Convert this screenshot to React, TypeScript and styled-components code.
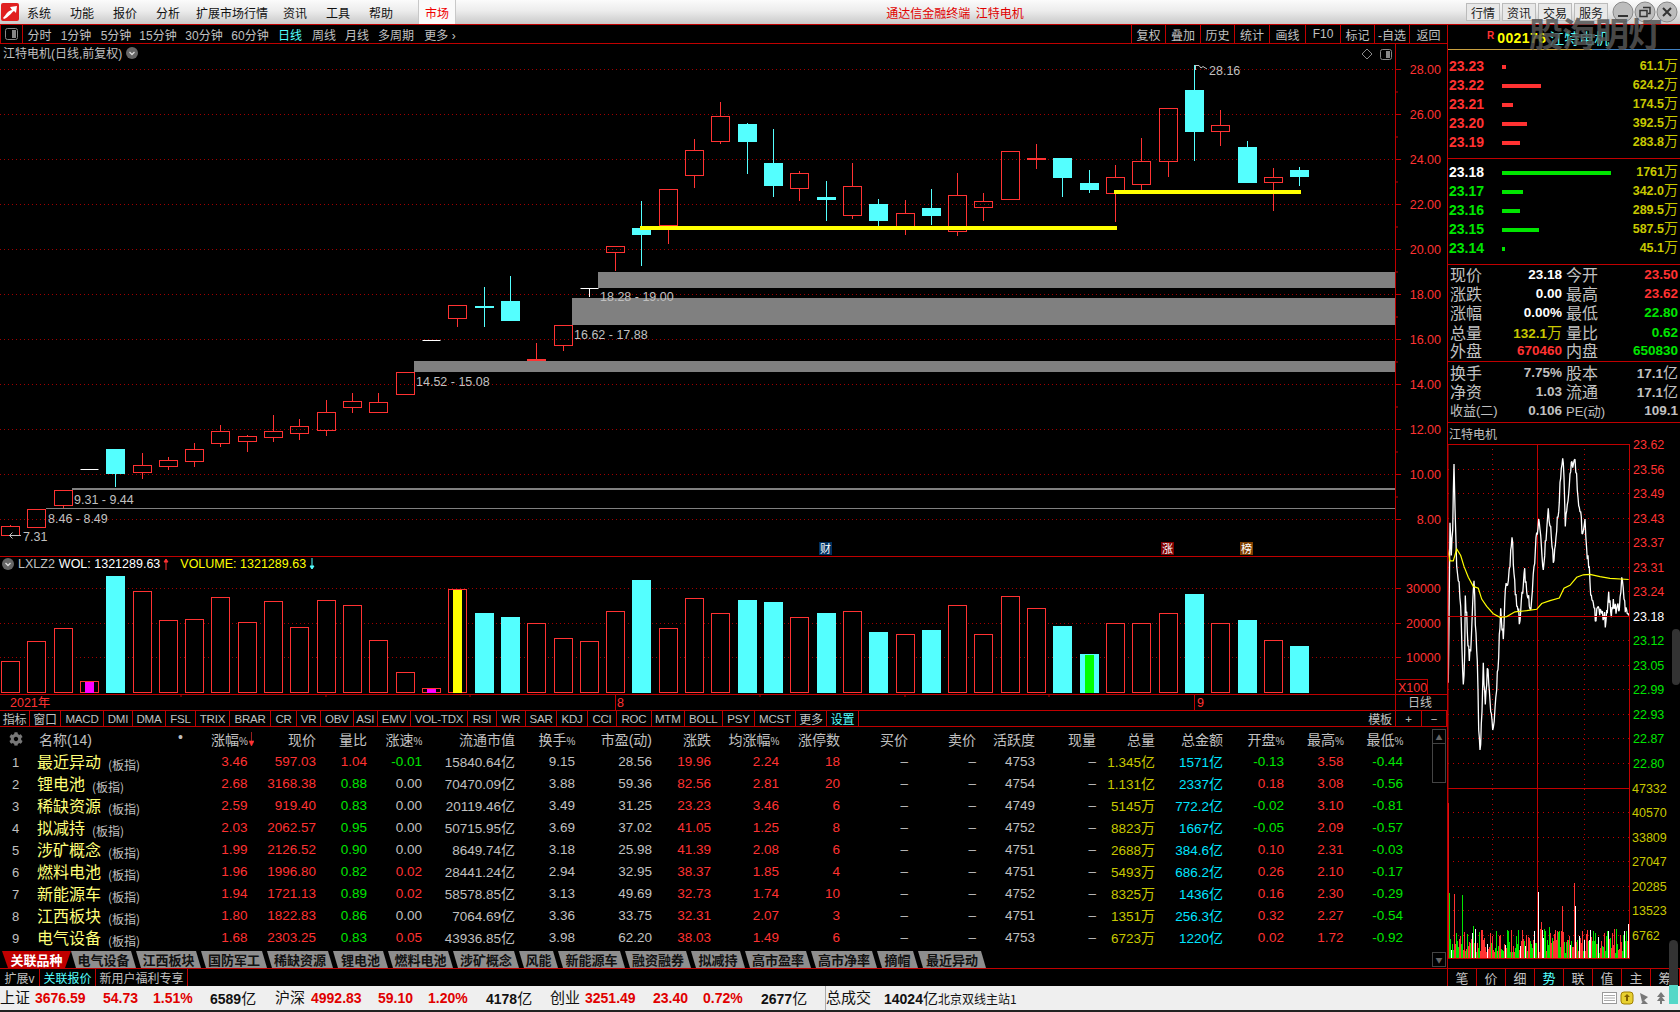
import React from 'react';
import styled, { createGlobalStyle } from 'styled-components';
import { FaCog } from 'react-icons/fa';

const CJK = '"Noto Sans CJK SC", sans-serif';
const SANS = '"Liberation Sans", "Noto Sans CJK SC", sans-serif';
const NARROW = '"Liberation Sans Narrow", "Liberation Sans", "Noto Sans CJK SC", sans-serif';
const RED = '#ff3232';
const LINE = '#c00000';
const CY = '#54ffff';
const GREEN = '#00e600';
const GRAY = '#c0c0c0';
const YEL = '#c8c800';
const SKY = '#00e5ff';

const Global = createGlobalStyle`
  html, body { margin: 0; padding: 0; background: #000; overflow: hidden; }
  * { box-sizing: border-box; }
`;

const Screen = styled.div`
  position: relative; width: 1680px; height: 1012px; background: #000; overflow: hidden;
  display: flex; flex-direction: column; font-family: ${CJK}; color: ${GRAY};
`;

/* ---------- title bar ---------- */
const TopBar = styled.div`
  height: 24px; flex: none; display: flex; align-items: center; color: #111; font-size: 12px;
  background: linear-gradient(#fbfbfb, #ececec 45%, #c9c9c9);
`;
const Logo = styled.svg`width: 18px; height: 18px; margin: 0 8px 0 1px; flex: none;`;
const MenuItem = styled.span<{ $wide?: boolean }>`
  margin-right: ${p => (p.$wide ? 15 : 19)}px; margin-left: ${p => (p.$wide ? -3 : 0)}px; white-space: nowrap;
`;
const MarketTab = styled.span`
  flex: none; width: 38px; height: 24px; margin-left: 6px; color: #f00000; background: #fafafa;
  border-left: 1px solid #c8c8c8; border-right: 1px solid #c8c8c8;
  display: flex; align-items: center; justify-content: center;
`;
const AppTitle = styled.div`
  flex: 1; text-align: center; color: #e00000; padding-right: 12px; white-space: pre;
`;
const TopButton = styled.span`
  width: 34px; height: 18px; margin-right: 2px; border: 1px solid #bbb; background: #e8e8e8; flex: none;
  display: flex; align-items: center; justify-content: center; color: #222;
`;
const WinButton = styled.svg`width: 22px; height: 22px; flex: none; margin-left: 0;`;
const WinGroup = styled.div`display: flex; margin-left: 2px; margin-right: 2px;`;

/* ---------- body ---------- */
const Body = styled.div`flex: 1; min-height: 0; display: flex;`;
const LeftCol = styled.div`width: 1447px; flex: none; display: flex; flex-direction: column;`;
const RightCol = styled.div`
  flex: 1; min-width: 0; display: flex; flex-direction: column; border-left: 1px solid ${LINE}; border-top: 1px solid ${LINE};
`;

const Toolbar = styled.div`
  height: 20px; flex: none; display: flex; align-items: center; font-size: 12px;
  border-top: 1px solid ${LINE}; border-bottom: 1px solid ${LINE};
`;
const PanelToggle = styled.span`
  width: 23px; height: 100%; flex: none; border-left: 1px solid ${LINE}; border-right: 1px solid ${LINE};
  display: flex; align-items: center; justify-content: center;
`;
const ToggleGlyph = styled.svg`width: 13px; height: 12px; display: block;`;
const Period = styled.span<{ $active?: boolean; $w: number }>`
  width: ${p => p.$w}px; flex: none; text-align: center; white-space: nowrap; font-family: ${SANS};
  color: ${p => (p.$active ? CY : GRAY)};
`;
const Spacer = styled.div`flex: 1;`;
const ToolBtn = styled.span<{ $w: number }>`
  width: ${p => p.$w}px; height: 100%; flex: none; border-left: 1px solid ${LINE};
  display: flex; align-items: center; justify-content: center; font-family: ${SANS};
`;

const ChartWrap = styled.div<{ $h: number }>`position: relative; height: ${p => p.$h}px; flex: none;`;
const ChartSvg = styled.svg`display: block;`;
const ChartTitle = styled.div`
  position: absolute; left: 3px; top: 0; font-size: 12px; display: flex; align-items: center; gap: 4px; font-family: ${SANS};
`;
const Chevron = styled.svg`width: 12px; height: 12px; display: block;`;
const VolTitle = styled.div`
  position: absolute; left: 2px; top: 1px; display: flex; align-items: center; font-size: 12.5px; font-family: ${SANS}; white-space: pre;
`;
const TitlePart = styled.span<{ $c: string; $ml?: number }>`color: ${p => p.$c}; margin-left: ${p => p.$ml ?? 0}px;`;
const Badge = styled.span<{ $bg: string; $x: number }>`
  position: absolute; left: ${p => p.$x}px; bottom: 1px; width: 13px; height: 13px; background: ${p => p.$bg}; color: #fff;
  font-size: 11px; line-height: 13px; text-align: center;
`;

const IndexBar = styled.div`
  height: 17px; flex: none; display: flex; align-items: stretch; font-size: 12px; font-family: ${NARROW};
  border-top: 1px solid ${LINE}; border-bottom: 1px solid ${LINE};
`;
const IndexTab = styled.span<{ $w: number; $active?: boolean }>`
  width: ${p => p.$w}px; flex: none; border-right: 1px solid ${LINE}; display: flex; align-items: center; justify-content: center;
  font-family: ${SANS}; font-size: 11.5px; letter-spacing: -0.2px; color: ${p => (p.$active ? CY : GRAY)};
`;
const IndexTabFirst = styled(IndexTab)`font-size: 12px;`;

const TableArea = styled.div`flex: 1; min-height: 0; display: flex;`;
const TableMain = styled.div`width: 1432px; flex: none; display: flex; flex-direction: column;`;
const COLS = '31px 156px 60.5px 68.5px 51px 55px 93px 60px 77px 59px 68px 61px 68px 68px 59px 61px 59px 68px 61px 59.5px 59.5px';
const HeadRow = styled.div`
  display: grid; grid-template-columns: ${COLS}; height: 23px; align-items: center; font-size: 14px; color: ${GRAY};
`;
const HeadCell = styled.span`text-align: right; white-space: nowrap; font-family: ${NARROW}; position: relative;`;
const HeadTight = styled.span`font-size: 10px; letter-spacing: -0.4px;`;
const NameHead = styled.span`
  display: flex; justify-content: space-between; padding: 0 4px 0 8px; font-size: 14px; font-family: ${SANS}; white-space: nowrap;
`;
const GearCell = styled.span`display: flex; justify-content: center; color: #777; font-size: 14px;`;
const SortArrow = styled.svg`position: absolute; right: -6px; top: 3px; width: 5px; height: 14px;`;
const Row = styled.div`display: grid; grid-template-columns: ${COLS}; height: 22px; align-items: center;`;
const RowNo = styled.span`text-align: center; font-family: ${NARROW}; font-size: 13px;`;
const RowName = styled.span`white-space: nowrap; padding-left: 6px; color: #ffff78; font-size: 16px; line-height: 22px;`;
const NameTag = styled.span`color: ${GRAY}; font-size: 12px; margin-left: 7px; position: relative; top: 2px;`;
const Val = styled.span<{ $c?: string }>`
  text-align: right; color: ${p => p.$c || GRAY}; font-family: ${NARROW}; font-size: 13.5px; white-space: nowrap; line-height: 22px;
`;
const Unit = styled.span`font-family: ${CJK}; font-size: 14px;`;
const TabStrip = styled.div`height: 17px; margin-top: 3px; flex: none; display: flex; padding-left: 2px;`;
const StripTab = styled.span<{ $w: number; $first?: boolean }>`
  width: ${p => p.$w}px; flex: none; height: 17px; display: flex; align-items: center; justify-content: center;
  background: ${p => (p.$first ? '#c00000' : '#8e8e8e')}; color: ${p => (p.$first ? '#fff' : '#111')};
  font-size: 13px; font-weight: 700;
  clip-path: ${p => (p.$first ? 'polygon(0 0, 100% 0, calc(100% - 6px) 100%, 6px 100%)' : 'polygon(0 0, calc(100% - 5px) 0, 100% 100%, 5px 100%)')};
`;
const Scrollbar = styled.div`width: 15px; flex: none; display: flex; flex-direction: column; padding: 2px 1px 1px 0;`;
const ScrollBtn = styled.span`
  height: 15px; flex: none; border: 1px solid #444; display: flex; align-items: center; justify-content: center; color: #666; font-size: 7px;
`;
const ScrollThumb = styled.span`height: 39px; flex: none; border: 1px solid #444; border-top: 0;`;

const FootTabs = styled.div`
  height: 18px; flex: none; display: flex; font-size: 12px; border-top: 1px solid ${LINE}; margin-top: 0;
`;
const FootTab = styled.span<{ $w: number; $active?: boolean }>`
  width: ${p => p.$w}px; flex: none; border-right: 1px solid ${LINE}; display: flex; align-items: center; justify-content: center; font-family: ${SANS};
  color: ${p => (p.$active ? CY : GRAY)};
`;

/* ---------- right side ---------- */
const QuoteHead = styled.div`
  height: 25px; flex: none; display: flex; align-items: center; padding-left: 39px; position: relative; font-family: ${SANS};
  &::after { content: ''; position: absolute; left: 0; right: 0; bottom: 0; height: 1px; background: linear-gradient(90deg, #c8a040 0 62%, #4080c0 62%); }
`;
const RMark = styled.span`color: ${RED}; font-weight: 700; font-size: 10px; margin-right: 3px; position: relative; top: -2px;`;
const Code = styled.span`color: #ffff00; font-weight: 700; font-size: 14px; letter-spacing: .4px; margin-right: 3px;`;
const StockName = styled.span`color: ${CY}; font-size: 15px; font-family: ${CJK};`;
const Book = styled.div<{ $h: number; $pt: number }>`
  height: ${p => p.$h}px; flex: none; padding-top: ${p => p.$pt}px; border-bottom: 1px solid ${LINE};
`;
const BookRow = styled.div`display: grid; grid-template-columns: 53px 1fr auto; height: 19px; align-items: center; padding: 0 2px 0 1px; line-height: 19px;`;
const BookPrice = styled.span<{ $c: string }>`color: ${p => p.$c}; font-family: ${SANS}; font-weight: 700; font-size: 14px;`;
const BookBar = styled.span<{ $c: string }>`height: 4px; background: ${p => p.$c}; display: block;`;
const BookVol = styled.span`color: ${YEL}; font-family: ${SANS}; font-weight: 700; font-size: 12.5px; white-space: nowrap; position: relative; top: -1px;`;
const BookUnit = styled.span`font-family: ${CJK}; font-weight: 400; font-size: 14px;`;
const InfoRow = styled.div`display: grid; grid-template-columns: 112px 32px 1fr; column-gap: 4px; height: 19px; align-items: center; padding: 0 2px 0 2px; font-size: 16px;`;
const InfoLabel = styled.span`display: flex; justify-content: space-between; align-items: center; white-space: nowrap; line-height: 19px;`;
const InfoVal = styled.span<{ $c: string }>`
  color: ${p => p.$c}; font-family: ${SANS}; font-weight: 700; font-size: 13.5px; text-align: right; white-space: nowrap; line-height: 19px;
`;
const InfoUnit = styled.span`font-family: ${CJK}; font-weight: 400; font-size: 15px;`;
const SecondLabel = styled.span`white-space: nowrap; line-height: 19px; margin-left: 0;`;
const SmallLabel = styled.span`font-size: 13px; font-family: ${SANS};`;
const MiniTitle = styled.div`height: 21px; flex: none; font-size: 12px; padding: 2px 0 0 1px; margin-bottom: -21px; position: relative; z-index: 1;`;
const MiniChart = styled.svg`display: block; flex: none;`;
const MiniTabs = styled.div`
  height: 19px; flex: none; margin-top: 9px; display: flex; border-top: 1px solid ${LINE}; border-bottom: 1px solid ${LINE};
`;
const MiniTab = styled.span<{ $active?: boolean }>`
  width: 29px; flex: none; border-right: 1px solid ${LINE}; display: flex; align-items: center; justify-content: center; font-size: 13px;
  color: ${p => (p.$active ? CY : GRAY)};
`;

/* ---------- status bar ---------- */
const StatusBar = styled.div`
  height: 26px; flex: none; background: #efefef; border-bottom: 2px solid #222; display: flex; align-items: center; color: #111; font-family: ${SANS};
`;
const StatCell = styled.span<{ $w: number; $c?: string; $label?: boolean; $sep?: boolean }>`
  width: ${p => p.$w}px; flex: none; white-space: nowrap; color: ${p => p.$c || '#111'};
  font-size: ${p => (p.$label ? 15 : 14)}px; font-weight: ${p => (p.$label ? 400 : 700)}; line-height: 24px;
  border-left: ${p => (p.$sep ? '1px solid #aaa' : 'none')};
`;
const StatUnit = styled.span`font-family: ${CJK}; font-weight: 400; font-size: 15px;`;
const StatServer = styled.span`font-size: 12px; white-space: nowrap; font-family: ${CJK};`;
const Tray = styled.svg`margin-left: auto; margin-right: 8px; display: block; flex: none;`;

const Watermark = styled.div`
  position: absolute; left: 1529px; top: 10px; font-size: 34px; font-weight: 700; letter-spacing: -1px;
  color: rgba(85,85,85,.85); pointer-events: none; line-height: 46px; white-space: nowrap;
`;
const Handle = styled.div<{ $t: number; $h: number; $l: number; $w: number }>`
  position: absolute; left: ${p => p.$l}px; top: ${p => p.$t}px; width: ${p => p.$w}px; height: ${p => p.$h}px;
  background: #333; border-radius: 5px;
`;
const HandleFoot = styled(Handle)`
  background: linear-gradient(#333 70%, #54d8c8 70%); border-radius: 5px 5px 0 0;
`;

/* ---------- chart data ---------- */
type C = [string, number, number, number, number];
const candles: C[] = [
  ['r', 526, 535, 525, 535], ['r', 509, 527, 509, 527], ['r', 490, 505, 490, 508], ['w', 469, 469, 469, 469],
  ['c', 449, 474, 449, 487], ['r', 465, 472, 453, 479], ['r', 460, 466, 457, 470], ['r', 449, 461, 443, 467],
  ['r', 431, 443, 425, 447], ['r', 436, 441, 435, 452], ['r', 431, 437, 415, 442], ['r', 426, 433, 419, 440],
  ['r', 412, 430, 400, 436], ['r', 401, 407, 393, 413], ['r', 402, 412, 393, 413], ['r', 372, 394, 372, 394],
  ['w', 340, 340, 340, 340], ['r', 305, 318, 305, 327], ['c', 306, 308, 287, 327], ['c', 301, 321, 276, 321],
  ['d', 360, 360, 343, 360], ['r', 325, 345, 325, 351], ['t', 288, 288, 288, 297], ['r', 246, 252, 246, 271],
  ['c', 228, 235, 201, 266], ['r', 189, 225, 189, 244], ['r', 150, 175, 139, 188], ['r', 116, 141, 102, 144],
  ['c', 124, 142, 123, 174], ['c', 163, 186, 129, 197], ['r', 173, 188, 171, 201], ['c', 197, 200, 181, 221],
  ['r', 186, 215, 163, 219], ['c', 204, 221, 199, 227], ['r', 213, 229, 200, 235], ['c', 208, 216, 189, 225],
  ['r', 195, 231, 173, 236], ['r', 201, 207, 193, 221], ['r', 151, 199, 151, 199], ['d', 159, 159, 144, 169],
  ['c', 158, 178, 158, 197], ['c', 183, 190, 170, 193], ['r', 177, 193, 165, 222], ['r', 161, 184, 138, 191],
  ['r', 108, 161, 108, 177], ['c', 90, 132, 65, 161], ['r', 125, 131, 110, 146], ['c', 147, 183, 141, 183],
  ['r', 177, 182, 168, 211], ['c', 170, 177, 167, 186],
];
const cxOf = (i: number) => Math.round(10 + 26.31 * i) + 0.5;
const vols: [string, number, string?][] = [
  ['r', 661], ['r', 641], ['r', 628], ['r', 681, '#ff00ff'], ['c', 576], ['r', 591], ['r', 620], ['r', 619], ['r', 597], ['r', 622],
  ['r', 601], ['r', 627], ['r', 600], ['r', 605], ['r', 640], ['r', 672], ['r', 688, '#ff00ff'], ['r', 589, '#ffff00'], ['c', 613], ['c', 617],
  ['r', 623], ['r', 638], ['r', 641], ['r', 611], ['c', 580], ['r', 628], ['r', 598], ['r', 613], ['c', 600], ['c', 602],
  ['r', 617], ['c', 613], ['r', 611], ['c', 632], ['r', 634], ['c', 630], ['r', 605], ['r', 634], ['r', 596], ['r', 608],
  ['c', 626], ['c', 654, '#00ff00'], ['r', 623], ['r', 623], ['r', 613], ['c', 594], ['r', 623], ['c', 620], ['r', 640], ['c', 646],
];
const priceGrid = [69, 114, 159, 204, 249, 294, 339, 384, 429, 474, 519];
const priceLabels = ['28.00', '26.00', '24.00', '22.00', '20.00', '18.00', '16.00', '14.00', '12.00', '10.00', '8.00'];

const KChart = () => (
  <ChartSvg width={1447} height={512} viewBox="0 44 1447 512">
    {priceGrid.map(y => <line key={y} x1={0} x2={1395} y1={y + 0.5} y2={y + 0.5} stroke="#a00000" strokeDasharray="1 3" />)}
    <rect x={598} y={272} width={797} height={16} fill="#808080" />
    <rect x={572} y={298} width={823} height={27} fill="#808080" />
    <rect x={414} y={361} width={981} height={11} fill="#808080" />
    <rect x={72} y={488} width={1323} height={2} fill="#808080" />
    <rect x={46} y={508} width={1349} height={1} fill="#808080" />
    {candles.map(([t, top, bot, wt, wb], i) => {
      const cx = cxOf(i);
      if (t === 'w') return <line key={i} x1={cx - 9} x2={cx + 9} y1={top + 0.5} y2={top + 0.5} stroke="#fff" />;
      if (t === 't') return <g key={i} stroke="#fff"><line x1={cx - 9} x2={cx + 9} y1={top + 0.5} y2={top + 0.5} /><line x1={cx} x2={cx} y1={top} y2={wb} /></g>;
      if (t === 'd') return <g key={i}><line x1={cx} x2={cx} y1={wt} y2={wb} stroke={RED} /><rect x={cx - 9.5} y={top - 1} width={19} height={2} fill={RED} /></g>;
      if (t === 'c') return <g key={i}><line x1={cx} x2={cx} y1={wt} y2={wb} stroke={CY} /><rect x={cx - 9.5} y={top} width={19} height={bot - top} fill={CY} /></g>;
      return (
        <g key={i} stroke={RED} fill="none">
          {wt < top && <line x1={cx} x2={cx} y1={wt} y2={top} />}
          {wb > bot && <line x1={cx} x2={cx} y1={bot} y2={wb} />}
          <rect x={cx - 9} y={top + 0.5} width={18} height={bot - top} />
        </g>
      );
    })}
    <rect x={640} y={226} width={477} height={4} fill="#ffff00" />
    <rect x={1114} y={190} width={187} height={4} fill="#ffff00" />
    <g fontFamily="Liberation Sans" fontSize={12.5} fill={GRAY}>
      <text x={600} y={301}>18.28 - 19.00</text>
      <text x={574} y={339}>16.62 - 17.88</text>
      <text x={416} y={386}>14.52 - 15.08</text>
      <text x={74} y={504}>9.31 - 9.44</text>
      <text x={48} y={523}>8.46 - 8.49</text>
      <text x={23} y={541}>7.31</text>
      <text x={1209} y={75}>28.16</text>
    </g>
    <path d="M21 535.5H9M12.5 532.5L9.5 535.5L12.5 538.5" stroke={GRAY} fill="none" />
    <path d="M1195.5 65V70M1195.5 65.5H1199L1201 68L1203 66.5L1207 69" stroke={GRAY} fill="none" />
    <path d="M1367 49l5 5-5 5-5-5z" stroke="#888" fill="none" />
    <rect x={1380.5} y={49.5} width={11} height={10} rx={2} stroke="#888" fill="none" />
    <rect x={1386} y={51} width={4} height={7} fill="#888" />
    <line x1={1395.5} x2={1395.5} y1={44} y2={556} stroke={LINE} />
    {priceGrid.map((y, i) => (
      <g key={y}>
        <line x1={1395} x2={1401} y1={y + 0.5} y2={y + 0.5} stroke={LINE} />
        {y + 22 < 540 && <line x1={1395} x2={1398} y1={y + 23} y2={y + 23} stroke={LINE} />}
        <text x={1441} y={y + 5} textAnchor="end" fontFamily="Liberation Sans" fontSize={12.5} fill={RED}>{priceLabels[i]}</text>
      </g>
    ))}
  </ChartSvg>
);

const VolChart = () => (
  <ChartSvg width={1447} height={154} viewBox="0 556 1447 154">
    <line x1={0} x2={1447} y1={556.5} y2={556.5} stroke={LINE} />
    {[588, 623, 657].map(y => <line key={y} x1={0} x2={1395} y1={y + 0.5} y2={y + 0.5} stroke="#a00000" strokeDasharray="1 3" />)}
    {vols.map(([t, top, inner], i) => {
      const cx = cxOf(i);
      return (
        <g key={i}>
          {t === 'r'
            ? <rect x={cx - 9} y={top + 0.5} width={18} height={693 - top - 1} fill="#000" stroke={RED} />
            : <rect x={cx - 9.5} y={top} width={19} height={693 - top} fill={CY} />}
          {inner && <rect x={cx - 4.5} y={top + 1} width={9} height={692 - top} fill={inner} />}
        </g>
      );
    })}
    <line x1={0} x2={1447} y1={694.5} y2={694.5} stroke={LINE} />
    <line x1={1395.5} x2={1395.5} y1={556} y2={710} stroke={LINE} />
    {[181, 326, 470, 760, 905, 1049].map(x => <line key={x} x1={x} x2={x} y1={694} y2={697} stroke={LINE} />)}
    <line x1={615.5} x2={615.5} y1={694} y2={710} stroke={LINE} />
    <line x1={1194.5} x2={1194.5} y1={694} y2={710} stroke={LINE} />
    <g fontFamily="Liberation Sans" fontSize={12.5} fill={RED}>
      {[['30000', 593], ['20000', 628], ['10000', 662]].map(([t, y]) => <text key={t as string} x={1406} y={y as number}>{t}</text>)}
      <text x={1398} y={692}>X100</text>
      <text x={617} y={707}>8</text>
      <text x={1197} y={707}>9</text>
      <text x={10} y={707} fontFamily="Liberation Sans, Noto Sans CJK SC">2021年</text>
    </g>
    {[588, 623, 657].map(y => <line key={y} x1={1395} x2={1401} y1={y + 0.5} y2={y + 0.5} stroke={LINE} />)}
    <rect x={1395.5} y={679.5} width={32} height={15} fill="none" stroke={LINE} />
    <text x={1408} y={707} fontFamily="Noto Sans CJK SC" fontSize={12} fill={GRAY}>日线</text>
  </ChartSvg>
);

const whiteKnots = [22,265,25,720,30,280,34,370,38,300,42,118,45,240,50,400,55,440,62,510,66,630,70,725,74,640,76,480,82,580,88,660,94,600,98,500,102,440,106,560,112,660,116,850,120,905,126,800,130,665,136,780,142,680,148,740,152,800,158,850,165,790,170,740,176,650,182,515,190,600,196,465,205,440,210,400,216,320,222,420,230,510,240,550,246,470,254,405,260,470,268,510,275,490,282,400,288,320,296,270,304,340,310,410,318,330,325,240,332,290,340,390,348,320,356,250,364,130,370,115,376,290,384,220,392,140,400,120,405,105,412,190,420,250,428,310,435,270,442,380,448,400,452,480,460,500,468,550,475,510,485,530,498,550,506,470,514,540,520,490,528,530,538,520,545,430,552,490,560,520,566,535];
const yellowKnots = [22,350,30,385,40,385,50,352,62,370,72,400,85,430,100,455,115,460,125,490,140,510,160,530,180,540,200,538,225,525,260,522,290,518,305,502,330,494,358,487,372,460,390,452,410,430,430,423,450,422,480,428,510,433,566,436];
const rnd = (n: number) => { const v = Math.sin(n * 12.9898) * 43758.5453; return v - Math.floor(v); };
const mapX = (px: number) => 1440 + px / 3;
const mapY = (py: number) => 420 + py / 2.751;
const smoothPts = (k: number[]) => { const o: string[] = []; for (let i = 0; i < k.length; i += 2) o.push(`${mapX(k[i]).toFixed(1)},${mapY(k[i + 1]).toFixed(1)}`); return o.join(' '); };
const jagged = (() => {
  const o: string[] = [];
  for (let i = 0; i < whiteKnots.length - 2; i += 2) {
    const [x0, y0, x1, y1] = [whiteKnots[i], whiteKnots[i + 1], whiteKnots[i + 2], whiteKnots[i + 3]];
    const steps = Math.max(1, Math.round((x1 - x0) / 2.2));
    for (let s = 0; s < steps; s++) {
      const t = s / steps;
      const amp = s === 0 ? 0 : 22;
      const yy = y0 + (y1 - y0) * t + (rnd(i * 7 + s) - 0.5) * amp * 2;
      o.push(`${mapX(x0 + (x1 - x0) * t).toFixed(1)},${mapY(yy).toFixed(1)}`);
    }
  }
  o.push(`${mapX(566).toFixed(1)},${mapY(535).toFixed(1)}`);
  return o.join(' ');
})();
const miniVols = (() => {
  const out: { x: number; h: number; c: string }[] = [];
  for (let x = 1448; x < 1629; x++) {
    const r = rnd(x * 3.1);
    const h = 6 + rnd(x * 1.7) * 24 + (rnd(x * 0.37) > 0.9 ? 8 : 0);
    out.push({ x, h, c: r < 0.42 ? '#ff3232' : r < 0.84 ? '#00e600' : '#ffffff' });
  }
  const sp: [number, number, string][] = [[1447.6, 1050, '#ff2020'], [1448.5, 1298, '#00e600'], [1454, 1300, '#ff3232'], [1462, 1305, '#00e600'], [1538, 1295, '#ffffff'], [1562, 1335, '#ff3232'], [1574, 1270, '#ff3232'], [1575, 1335, '#ffffff'], [1628, 1385, '#ffffff']];
  sp.forEach(([x, py, c]) => out.push({ x, h: 958 - mapY(py), c }));
  return out;
})();
const miniPrices: [string, number, string][] = [
  ['23.62', 443.6, RED], ['23.56', 468, RED], ['23.49', 492, RED], ['23.43', 517, RED], ['23.37', 541, RED], ['23.31', 566, RED], ['23.24', 590, RED],
  ['23.18', 615, '#fff'], ['23.12', 639, GREEN], ['23.05', 664, GREEN], ['22.99', 688, GREEN], ['22.93', 713, GREEN], ['22.87', 737, GREEN], ['22.80', 762, GREEN],
];
const miniVolLabels: [string, number][] = [['47332', 787.5], ['40570', 811], ['33809', 836], ['27047', 860], ['20285', 885], ['13523', 909], ['6762', 934]];

const MinuteChart = () => (
  <MiniChart width={232} height={536} viewBox="1448 422 232 536">
    {[468, 492, 517, 541, 566, 590, 639, 664, 688, 713, 737, 762, 811, 836, 860, 885, 909, 934].map(y => (
      <line key={y} x1={1448} x2={1629} y1={y + 0.5} y2={y + 0.5} stroke={LINE} strokeDasharray="1 4" />
    ))}
    <line x1={1492.5} x2={1492.5} y1={443} y2={958} stroke={LINE} strokeDasharray="1 4" />
    <line x1={1584.5} x2={1584.5} y1={443} y2={958} stroke={LINE} strokeDasharray="1 4" />
    {miniVols.map((b, i) => <rect key={i} x={b.x} y={958 - b.h} width={1} height={b.h} fill={b.c} shapeRendering="crispEdges" />)}
    <line x1={1537.5} x2={1537.5} y1={443} y2={958} stroke={LINE} />
    <polyline points={jagged} fill="none" stroke="#fff" strokeWidth={1.3} strokeLinejoin="bevel" />
    <line x1={1448} x2={1629} y1={615.5} y2={615.5} stroke={LINE} />
    <polyline points={smoothPts(yellowKnots)} fill="none" stroke="#ffff00" strokeWidth={1.2} />
    <rect x={1448} y={443.5} width={181.5} height={514} fill="none" stroke={LINE} />
    <line x1={1448} x2={1629} y1={787.5} y2={787.5} stroke={LINE} />
    <g fontFamily="Liberation Sans" fontSize={12.5}>
      {miniPrices.map(([t, y, c]) => <text key={t} x={1633} y={y + 4.5} fill={c}>{t}</text>)}
      {miniVolLabels.map(([t, y]) => <text key={t} x={1632} y={y + 4.5} fill={YEL}>{t}</text>)}
    </g>
  </MiniChart>
);

/* ---------- content tables ---------- */
const tone = (v: string) => (parseFloat(v) > 0 ? RED : parseFloat(v) < 0 ? GREEN : GRAY);
const rows = [
  ['最近异动', '3.46', '597.03', '1.04', '-0.01', '15840.64', '9.15', '28.56', '19.96', '2.24', '18', '4753', '1.345', '亿', '1571', '-0.13', '3.58', '-0.44'],
  ['锂电池', '2.68', '3168.38', '0.88', '0.00', '70470.09', '3.88', '59.36', '82.56', '2.81', '20', '4754', '1.131', '亿', '2337', '0.18', '3.08', '-0.56'],
  ['稀缺资源', '2.59', '919.40', '0.83', '0.00', '20119.46', '3.49', '31.25', '23.23', '3.46', '6', '4749', '5145', '万', '772.2', '-0.02', '3.10', '-0.81'],
  ['拟减持', '2.03', '2062.57', '0.95', '0.00', '50715.95', '3.69', '37.02', '41.05', '1.25', '8', '4752', '8823', '万', '1667', '-0.05', '2.09', '-0.57'],
  ['涉矿概念', '1.99', '2126.52', '0.90', '0.00', '8649.74', '3.18', '25.98', '41.39', '2.08', '6', '4751', '2688', '万', '384.6', '0.10', '2.31', '-0.03'],
  ['燃料电池', '1.96', '1996.80', '0.82', '0.02', '28441.24', '2.94', '32.95', '38.37', '1.85', '4', '4751', '5493', '万', '686.2', '0.26', '2.10', '-0.17'],
  ['新能源车', '1.94', '1721.13', '0.89', '0.02', '58578.85', '3.13', '49.69', '32.73', '1.74', '10', '4752', '8325', '万', '1436', '0.16', '2.30', '-0.29'],
  ['江西板块', '1.80', '1822.83', '0.86', '0.00', '7064.69', '3.36', '33.75', '32.31', '2.07', '3', '4751', '1351', '万', '256.3', '0.32', '2.27', '-0.54'],
  ['电气设备', '1.68', '2303.25', '0.83', '0.05', '43936.85', '3.98', '62.20', '38.03', '1.49', '6', '4753', '6723', '万', '1220', '0.02', '1.72', '-0.92'],
];
const heads = ['涨幅%', '现价', '量比', '涨速%', '流通市值', '换手%', '市盈(动)', '涨跌', '均涨幅%', '涨停数', '买价', '卖价', '活跃度', '现量', '总量', '总金额', '开盘%', '最高%', '最低%'];
const indexTabs: [string, number][] = [['MACD', 43], ['DMI', 29], ['DMA', 33], ['FSL', 30], ['TRIX', 34], ['BRAR', 41], ['CR', 26], ['VR', 24], ['OBV', 32.5], ['ASI', 24.5], ['EMV', 33], ['VOL-TDX', 57], ['RSI', 29], ['WR', 29], ['SAR', 31], ['KDJ', 31], ['CCI', 29], ['ROC', 35], ['MTM', 32.5], ['BOLL', 38.5], ['PSY', 32], ['MCST', 41]];
const stripTabs: [string, number][] = [['关联品种', 69], ['电气设备', 65], ['江西板块', 65], ['国防军工', 66], ['稀缺资源', 66], ['锂电池', 55], ['燃料电池', 65], ['涉矿概念', 66], ['风能', 39], ['新能源车', 67], ['融资融券', 66], ['拟减持', 54], ['高市盈率', 66], ['高市净率', 66], ['摘帽', 41], ['最近异动', 68]];
const periods: [string, number, boolean?][] = [['分时', 33], ['1分钟', 40], ['5分钟', 40], ['15分钟', 44], ['30分钟', 48], ['60分钟', 44], ['日线', 36, true], ['周线', 32], ['月线', 34], ['多周期', 44], ['更多 ›', 44]];
const toolBtns: [string, number][] = [['复权', 34], ['叠加', 35], ['历史', 34], ['统计', 35], ['画线', 36], ['F10', 35], ['标记', 34], ['-自选', 35], ['返回', 38]];
const sells: [string, number, string, string][] = [['23.23', 4, '61.1', '万'], ['23.22', 39, '624.2', '万'], ['23.21', 11, '174.5', '万'], ['23.20', 25, '392.5', '万'], ['23.19', 18, '283.8', '万']];
const buys: [string, number, string, string][] = [['23.18', 109, '1761', '万'], ['23.17', 21, '342.0', '万'], ['23.16', 18, '289.5', '万'], ['23.15', 37, '587.5', '万'], ['23.14', 3, '45.1', '万']];

const Cell = ({ v, c, u }: { v: string; c?: string; u?: string }) => <Val $c={c}>{v}{u && <Unit>{u}</Unit>}</Val>;
const HeadLabel = ({ h }: { h: string }) => h.endsWith('%') ? <>{h.slice(0, -1)}<HeadTight>%</HeadTight></> : <>{h}</>;

export default function App() {
  return (
    <Screen>
      <Global />
      <TopBar>
        <Logo viewBox="0 0 18 18">
          <rect width="18" height="18" rx="2" fill="#e02020" />
          <path d="M2 15C5 12 6 8 11 7L9 4L16 3L15 10L13 8C10 10 8 14 3 16Z" fill="#fff" />
        </Logo>
        {['系统', '功能', '报价', '分析'].map(t => <MenuItem key={t}>{t}</MenuItem>)}
        <MenuItem $wide>扩展市场行情</MenuItem>
        {['资讯', '工具', '帮助'].map(t => <MenuItem key={t}>{t}</MenuItem>)}
        <MarketTab>市场</MarketTab>
        <AppTitle>通达信金融终端  江特电机</AppTitle>
        {['行情', '资讯', '交易', '服务'].map(t => <TopButton key={t}>{t}</TopButton>)}
        <WinGroup>
          <WinButton viewBox="0 0 22 22"><circle cx="11" cy="11" r="10" fill="#bdbdbd" stroke="#888" /><rect x="6" y="14" width="10" height="2" fill="#333" /></WinButton>
          <WinButton viewBox="0 0 22 22"><circle cx="11" cy="11" r="10" fill="#bdbdbd" stroke="#888" /><path d="M9 6.5h7v6h-2M6 9.5h7v6H6z" fill="none" stroke="#333" strokeWidth="1.5" /></WinButton>
          <WinButton viewBox="0 0 22 22"><circle cx="11" cy="11" r="10" fill="#bdbdbd" stroke="#888" /><path d="M7 7l8 8M15 7l-8 8" stroke="#333" strokeWidth="2" /></WinButton>
        </WinGroup>
      </TopBar>

      <Body>
        <LeftCol>
          <Toolbar>
            <PanelToggle>
              <ToggleGlyph viewBox="0 0 13 12"><rect x=".5" y=".5" width="12" height="11" rx="2" fill="none" stroke="#888" /><rect x="7" y="2" width="4" height="8" fill="#888" /></ToggleGlyph>
            </PanelToggle>
            {periods.map(([t, w, a]) => <Period key={t} $w={w} $active={a}>{t}</Period>)}
            <Spacer />
            {toolBtns.map(([t, w]) => <ToolBtn key={t} $w={w}>{t}</ToolBtn>)}
          </Toolbar>
          <ChartWrap $h={512}>
            <KChart />
            <ChartTitle>
              江特电机(日线,前复权)
              <Chevron viewBox="0 0 12 12"><circle cx="6" cy="6" r="6" fill="#666" /><path d="M3.5 5L6 7.5L8.5 5" stroke="#ddd" strokeWidth="1.3" fill="none" /></Chevron>
            </ChartTitle>
            <Badge $bg="#003060" $x={819}>财</Badge>
            <Badge $bg="#800000" $x={1161}>涨</Badge>
            <Badge $bg="#804000" $x={1240}>榜</Badge>
          </ChartWrap>
          <ChartWrap $h={154}>
            <VolChart />
            <VolTitle>
              <Chevron viewBox="0 0 12 12"><circle cx="6" cy="6" r="6" fill="#666" /><path d="M3.5 5L6 7.5L8.5 5" stroke="#ddd" strokeWidth="1.3" fill="none" /></Chevron>
              <TitlePart $c={GRAY} $ml={4}>LXLZ2</TitlePart>
              <TitlePart $c="#fff" $ml={4}>WOL: 1321289.63</TitlePart>
              <Chevron viewBox="0 0 12 12"><path d="M6 12V2M4 4L6 1L8 4Z" stroke={RED} fill={RED} /></Chevron>
              <TitlePart $c="#ffff00" $ml={8}>VOLUME: 1321289.63</TitlePart>
              <Chevron viewBox="0 0 12 12"><path d="M6 0V10M4 8L6 11L8 8Z" stroke={CY} fill={CY} /></Chevron>
            </VolTitle>
          </ChartWrap>
          <IndexBar>
            <IndexTabFirst $w={30}>指标</IndexTabFirst>
            <IndexTabFirst $w={31}>窗口</IndexTabFirst>
            {indexTabs.map(([t, w]) => <IndexTab key={t} $w={w}>{t}</IndexTab>)}
            <IndexTabFirst $w={31}>更多</IndexTabFirst>
            <IndexTabFirst $w={32} $active>设置</IndexTabFirst>
            <Spacer />
            <IndexTabFirst $w={31}>模板</IndexTabFirst>
            <IndexTab $w={26}>+</IndexTab>
            <IndexTab $w={25}>−</IndexTab>
          </IndexBar>
          <TableArea>
            <TableMain>
              <HeadRow>
                <GearCell><FaCog /></GearCell>
                <NameHead><span>名称(14)</span><span>•</span></NameHead>
                {heads.map((h, i) => (
                  <HeadCell key={h}>
                    <HeadLabel h={h} />
                    {i === 0 && <SortArrow viewBox="0 0 5 14"><path d="M2.5 0V12M0 9L2.5 14L5 9Z" fill={RED} stroke={RED} strokeWidth=".6" /></SortArrow>}
                  </HeadCell>
                ))}
              </HeadRow>
              {rows.map((r, i) => (
                <Row key={r[0]}>
                  <RowNo>{i + 1}</RowNo>
                  <RowName>{r[0]}<NameTag>(板指)</NameTag></RowName>
                  <Cell v={r[1]} c={RED} />
                  <Cell v={r[2]} c={RED} />
                  <Cell v={r[3]} c={i === 0 ? RED : GREEN} />
                  <Cell v={r[4]} c={tone(r[4])} />
                  <Cell v={r[5]} u="亿" />
                  <Cell v={r[6]} />
                  <Cell v={r[7]} />
                  <Cell v={r[8]} c={RED} />
                  <Cell v={r[9]} c={RED} />
                  <Cell v={r[10]} c={RED} />
                  <Cell v="–" />
                  <Cell v="–" />
                  <Cell v={r[11]} />
                  <Cell v="–" />
                  <Cell v={r[12]} c={YEL} u={r[13]} />
                  <Cell v={r[14]} c={SKY} u="亿" />
                  <Cell v={r[15]} c={tone(r[15])} />
                  <Cell v={r[16]} c={RED} />
                  <Cell v={r[17]} c={GREEN} />
                </Row>
              ))}
              <TabStrip>
                {stripTabs.map(([t, w], i) => <StripTab key={t} $w={w} $first={i === 0}>{t}</StripTab>)}
              </TabStrip>
            </TableMain>
            <Scrollbar>
              <ScrollBtn>▲</ScrollBtn>
              <ScrollThumb />
              <Spacer />
              <ScrollBtn>▼</ScrollBtn>
            </Scrollbar>
          </TableArea>
          <FootTabs>
            <FootTab $w={40}>扩展v</FootTab>
            <FootTab $w={56} $active>关联报价</FootTab>
            <FootTab $w={92}>新用户福利专享</FootTab>
          </FootTabs>
        </LeftCol>

        <RightCol>
          <QuoteHead>
            <RMark>R</RMark><Code>002176</Code><StockName>江特电机</StockName>
          </QuoteHead>
          <Book $h={109} $pt={6}>
            {sells.map(([p, w, v, u]) => (
              <BookRow key={p}>
                <BookPrice $c={RED}>{p}</BookPrice>
                <BookBar $c={RED} style={{ width: w }} />
                <BookVol>{v}<BookUnit>{u}</BookUnit></BookVol>
              </BookRow>
            ))}
          </Book>
          <Book $h={106} $pt={3}>
            {buys.map(([p, w, v, u], i) => (
              <BookRow key={p}>
                <BookPrice $c={i === 0 ? '#fff' : GREEN}>{p}</BookPrice>
                <BookBar $c={GREEN} style={{ width: w }} />
                <BookVol>{v}<BookUnit>{u}</BookUnit></BookVol>
              </BookRow>
            ))}
          </Book>
          <Book $h={97} $pt={0}>
            <InfoRow><InfoLabel>现价<InfoVal $c="#fff">23.18</InfoVal></InfoLabel><SecondLabel>今开</SecondLabel><InfoVal $c={RED}>23.50</InfoVal></InfoRow>
            <InfoRow><InfoLabel>涨跌<InfoVal $c="#fff">0.00</InfoVal></InfoLabel><SecondLabel>最高</SecondLabel><InfoVal $c={RED}>23.62</InfoVal></InfoRow>
            <InfoRow><InfoLabel>涨幅<InfoVal $c="#fff">0.00%</InfoVal></InfoLabel><SecondLabel>最低</SecondLabel><InfoVal $c={GREEN}>22.80</InfoVal></InfoRow>
            <InfoRow><InfoLabel>总量<InfoVal $c={YEL}>132.1<InfoUnit>万</InfoUnit></InfoVal></InfoLabel><SecondLabel>量比</SecondLabel><InfoVal $c={GREEN}>0.62</InfoVal></InfoRow>
            <InfoRow><InfoLabel>外盘<InfoVal $c={RED}>670460</InfoVal></InfoLabel><SecondLabel>内盘</SecondLabel><InfoVal $c={GREEN}>650830</InfoVal></InfoRow>
          </Book>
          <Book $h={61} $pt={0}>
            <InfoRow><InfoLabel>换手<InfoVal $c={GRAY}>7.75%</InfoVal></InfoLabel><SecondLabel>股本</SecondLabel><InfoVal $c={GRAY}>17.1<InfoUnit>亿</InfoUnit></InfoVal></InfoRow>
            <InfoRow><InfoLabel>净资<InfoVal $c={GRAY}>1.03</InfoVal></InfoLabel><SecondLabel>流通</SecondLabel><InfoVal $c={GRAY}>17.1<InfoUnit>亿</InfoUnit></InfoVal></InfoRow>
            <InfoRow><InfoLabel><SmallLabel>收益(二)</SmallLabel><InfoVal $c={GRAY}>0.106</InfoVal></InfoLabel><SecondLabel><SmallLabel>PE(动)</SmallLabel></SecondLabel><InfoVal $c={GRAY}>109.1</InfoVal></InfoRow>
          </Book>
          <MiniTitle>江特电机</MiniTitle>
          <MinuteChart />
          <MiniTabs>
            {['笔', '价', '细', '势', '联', '值', '主', '筹'].map(t => <MiniTab key={t} $active={t === '势'}>{t}</MiniTab>)}
          </MiniTabs>
        </RightCol>
      </Body>

      <StatusBar>
        <StatCell $w={35} $label>上证</StatCell>
        <StatCell $w={68} $c="#e00000">3676.59</StatCell>
        <StatCell $w={50} $c="#e00000">54.73</StatCell>
        <StatCell $w={57} $c="#e00000">1.51%</StatCell>
        <StatCell $w={65}>6589<StatUnit>亿</StatUnit></StatCell>
        <StatCell $w={36} $label>沪深</StatCell>
        <StatCell $w={67} $c="#e00000">4992.83</StatCell>
        <StatCell $w={50} $c="#e00000">59.10</StatCell>
        <StatCell $w={58} $c="#e00000">1.20%</StatCell>
        <StatCell $w={64}>4178<StatUnit>亿</StatUnit></StatCell>
        <StatCell $w={35} $label>创业</StatCell>
        <StatCell $w={68} $c="#e00000">3251.49</StatCell>
        <StatCell $w={50} $c="#e00000">23.40</StatCell>
        <StatCell $w={58} $c="#e00000">0.72%</StatCell>
        <StatCell $w={64}>2677<StatUnit>亿</StatUnit></StatCell>
        <StatCell $w={59} $label $sep>总成交</StatCell>
        <StatCell $w={54}>14024<StatUnit>亿</StatUnit></StatCell>
        <StatServer>北京双线主站1</StatServer>
        <Tray width="70" height="18" viewBox="0 0 70 18">
          <rect x=".5" y="3.5" width="14" height="11" fill="#fff" stroke="#999" />
          <path d="M2 6.5h11M2 9h11M2 11.5h11" stroke="#aaa" />
          <rect x="19" y="3" width="12" height="12" rx="3" fill="#e8d030" stroke="#a08000" />
          <path d="M25 5l3 3h-2v4h-2V8h-2z" fill="#806000" />
          <path d="M38 4l8 4-6 5zM42 11l-3 4h7z" fill="#777" />
          <path d="M59 3l4 5h-3l3 4h-3v3h-2v-3h-3l3-4h-3z" fill="#777" />
        </Tray>
      </StatusBar>

      <Watermark>股海明灯</Watermark>
      <Handle $l={1672} $t={629} $w={8} $h={56} />
      <HandleFoot $l={1669} $t={940} $w={9} $h={64} />
    </Screen>
  );
}
